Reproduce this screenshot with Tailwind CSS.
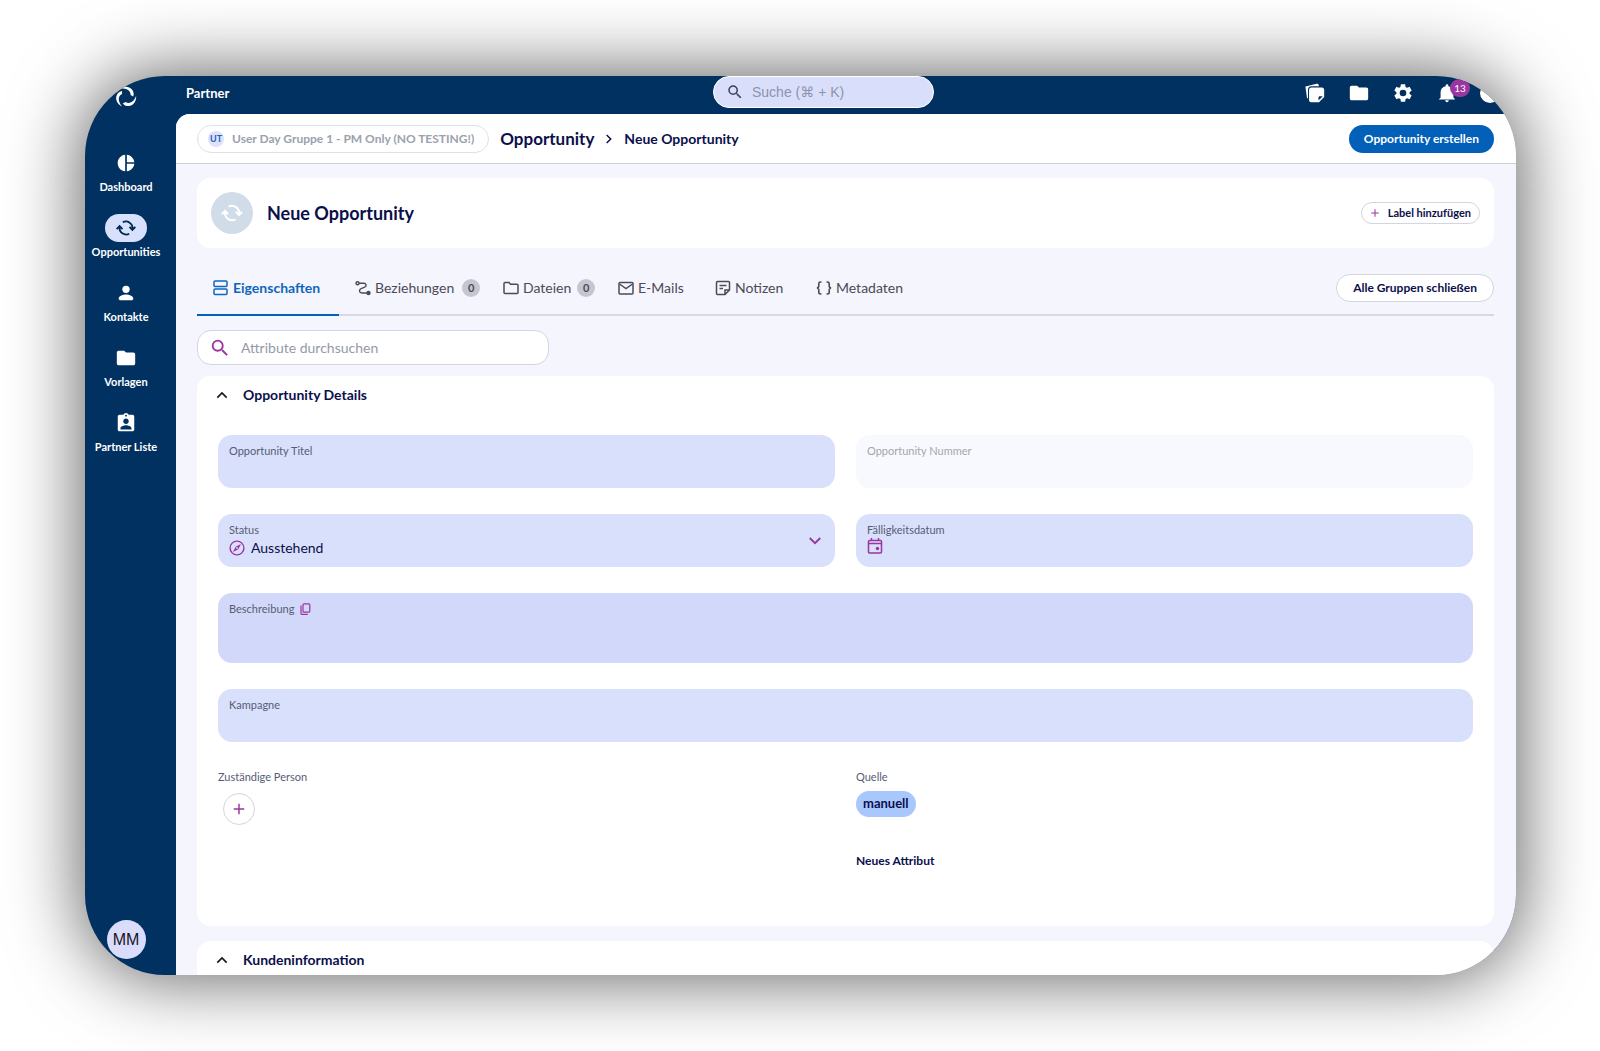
<!DOCTYPE html>
<html lang="de">

<head>
    <meta charset="UTF-8">
    <meta name="viewport" content="width=device-width, initial-scale=1.0">
    <title>Neue Opportunity</title>
    <script src="https://cdn.jsdelivr.net/npm/@tailwindcss/browser@4"></script>
</head>

<body class="bg-white font-['Lato','Open_Sans',sans-serif] text-[#0b0f4b]">

    <!-- shared icons -->
    <svg class="hidden">
        <symbol id="cycle" viewBox="0 0 24 24">
            <path d="M5 11a7.200 7.200 0 0 0 10.500 7.300M19 13A7.200 7.200 0 0 0 8.500 5.700M1.800 13.200L5 10l3.200 3.200M15.800 10.800L19 14l3.200-3.200" fill="none" stroke="currentColor" stroke-width="2" />
        </symbol>
        <symbol id="folder" viewBox="0 0 24 24">
            <path d="M10 4H4c-1.100 0-2 .9-2 2v12c0 1.100.9 2 2 2h16c1.100 0 2-.9 2-2V8c0-1.100-.9-2-2-2h-8z" fill="currentColor" />
        </symbol>
        <symbol id="search" viewBox="0 0 24 24">
            <path d="M15.500 14h-.79l-.28-.27A6.470 6.470 0 0 0 16 9.500 6.500 6.500 0 1 0 9.500 16c1.610 0 3.090-.59 4.230-1.570l.27.28v.79l5 4.990L20.490 19zm-6 0C7.010 14 5 11.990 5 9.500S7.010 5 9.500 5 14 7.010 14 9.500 11.990 14 9.500 14z" fill="currentColor" />
        </symbol>
        <symbol id="chevron-up" viewBox="0 0 24 24">
            <path d="M5 16l7-7 7 7" fill="none" stroke="currentColor" stroke-width="2.500" />
        </symbol>
        <symbol id="plus" viewBox="0 0 24 24">
            <path d="M12 3v18M3 12h18" fill="none" stroke="currentColor" stroke-width="2.500" />
        </symbol>
    </svg>

    <div class="h-screen py-[76px] pl-[85px] pr-[84px]">
        <div class="flex h-full overflow-hidden rounded-[80px] bg-[#013161] shadow-[0_0_72px_4px_rgba(0,0,0,0.62)]">

            <!-- sidebar -->
            <nav class="flex w-[91px] shrink-0 flex-col items-center pb-4 pr-[9px] pt-[9px] text-[11px] font-bold leading-[15px] text-white">
                <a href="#" aria-label="Startseite" class="mb-10 block">
                    <svg class="h-6 w-6" viewBox="0 0 24 24" fill="currentColor">
                        <path id="blade" d="M5.800 3.900C10.500.600 16 1.500 18.500 5.300c1.300 2 1.500 4.200.7 6.300L16.600 10c.1-2.600-1.200-4.700-3.400-5.600C11 3.500 8.400 3.300 5.800 3.900z" />
                        <use href="#blade" transform="rotate(120 12 12)" />
                        <use href="#blade" transform="rotate(240 12 12)" />
                    </svg>
                </a>
                <div class="flex flex-1 flex-col items-center gap-5">
                    <a href="#" class="flex flex-col items-center gap-0.5">
                        <span class="flex h-7 items-center">
                            <svg class="h-5 w-5" viewBox="0 0 24 24" fill="currentColor"><path d="M11 2v20c-5.070-.5-9-4.790-9-10s3.930-9.500 9-10zm2.030 0v8.990H22c-.47-4.740-4.240-8.520-8.970-8.990zm0 11.010V22c4.740-.47 8.500-4.250 8.970-8.990z" /></svg>
                        </span>
                        Dashboard
                    </a>
                    <a href="#" class="flex flex-col items-center gap-0.5">
                        <span class="flex h-7 w-[42px] items-center justify-center rounded-full bg-[#d8e1fc] text-[#01284f]">
                            <svg class="h-[22px] w-[22px]"><use href="#cycle" /></svg>
                        </span>
                        Opportunities
                    </a>
                    <a href="#" class="flex flex-col items-center gap-0.5">
                        <span class="flex h-7 items-center">
                            <svg class="h-[22px] w-[22px]" viewBox="0 0 24 24" fill="currentColor"><circle cx="12" cy="8" r="4" /><path d="M12 13.500c-2.700 0-8 1.300-8 4.200V18c0 1.100.9 2 2 2h12c1.100 0 2-.9 2-2v-.3c0-2.900-5.300-4.200-8-4.200z" /></svg>
                        </span>
                        Kontakte
                    </a>
                    <a href="#" class="flex flex-col items-center gap-0.5">
                        <span class="flex h-7 items-center"><svg class="h-[22px] w-[22px]"><use href="#folder" /></svg></span>
                        Vorlagen
                    </a>
                    <a href="#" class="flex flex-col items-center gap-0.5">
                        <span class="flex h-7 items-center">
                            <svg class="h-[22px] w-[22px]" viewBox="0 0 24 24" fill="currentColor"><path d="M19 3h-4.180C14.400 1.840 13.300 1 12 1s-2.400.84-2.820 2H5c-1.100 0-2 .9-2 2v14c0 1.100.9 2 2 2h14c1.100 0 2-.9 2-2V5c0-1.100-.9-2-2-2zm-7 0c.55 0 1 .45 1 1s-.45 1-1 1-1-.45-1-1 .45-1 1-1zm0 4c1.660 0 3 1.340 3 3s-1.340 3-3 3-3-1.340-3-3 1.340-3 3-3zm6 12H6v-1.400c0-2 4-3.100 6-3.100s6 1.100 6 3.100z" /></svg>
                        </span>
                        Partner Liste
                    </a>
                </div>
                <button type="button" class="h-[39px] w-[39px] rounded-full bg-[#d9dcfa] font-['Liberation_Sans',sans-serif] text-base font-normal text-[#16161d]">MM</button>
            </nav>

            <div class="flex min-w-0 flex-1 flex-col">

                <!-- top bar -->
                <header class="flex h-[38px] shrink-0 items-start justify-between pl-[10px] pr-4 text-white">
                    <span class="w-[527px] pt-[7px] text-[13px] font-bold leading-5">Partner</span>
                    <label class="flex h-8 w-[221px] items-center gap-2 rounded-full border border-white bg-[#d9dffb] pl-3">
                        <svg class="h-[18px] w-[18px] shrink-0 text-[#3c4257]"><use href="#search" /></svg>
                        <input type="search" aria-label="Suche" placeholder="Suche (⌘ + K)" class="w-full min-w-0 bg-transparent font-['Liberation_Sans','DejaVu_Sans',sans-serif] text-sm outline-none placeholder:text-[#8d93ab]">
                    </label>
                    <div class="flex flex-1 items-center justify-end gap-[22px] pt-[6px]">
                        <button type="button" aria-label="Notizen">
                            <svg class="h-[22px] w-[22px]" viewBox="0 0 24 24" fill="currentColor"><path d="M1.500 4.800L13.800 2c1-.3 1.900.2 2.200 1.200l.3 1.300H8C5.800 4.500 4.400 6 4.400 8v10L3.300 17.500z" /><path d="M8 6h11.500c1.400 0 2.500 1.100 2.500 2.500v7.900L16.400 22H8c-1.400 0-2.500-1.100-2.500-2.500v-11C5.500 7.100 6.600 6 8 6zm7.800 14.200l4.700-4.700h-3.200c-.8 0-1.500.7-1.500 1.500z" /></svg>
                        </button>
                        <button type="button" aria-label="Dateien"><svg class="h-[22px] w-[22px]"><use href="#folder" /></svg></button>
                        <button type="button" aria-label="Einstellungen">
                            <svg class="h-[22px] w-[22px]" viewBox="0 0 24 24" fill="currentColor"><path d="M19.140 12.940c.04-.3.060-.61.060-.94s-.02-.64-.07-.94l2.030-1.580a.49.49 0 0 0 .12-.61l-1.920-3.320a.49.49 0 0 0-.59-.22l-2.390.96a7 7 0 0 0-1.620-.94l-.36-2.540a.48.48 0 0 0-.48-.41h-3.840a.47.47 0 0 0-.47.41l-.36 2.540c-.59.24-1.130.57-1.620.94l-2.390-.96a.47.47 0 0 0-.59.22L2.740 8.870a.47.47 0 0 0 .12.61l2.030 1.580c-.05.3-.09.63-.09.94s.02.64.07.94l-2.030 1.580a.49.49 0 0 0-.12.61l1.920 3.320c.12.22.37.29.59.22l2.390-.96c.5.38 1.030.7 1.620.94l.36 2.540c.05.24.24.41.48.41h3.840c.24 0 .44-.17.47-.41l.36-2.540c.59-.24 1.130-.56 1.620-.94l2.390.96c.22.080.47 0 .59-.22l1.920-3.320a.47.47 0 0 0-.12-.61zM12 15.600A3.600 3.600 0 1 1 12 8.400a3.600 3.600 0 0 1 0 7.200z" /></svg>
                        </button>
                        <button type="button" aria-label="Benachrichtigungen" class="relative">
                            <svg class="h-[22px] w-[22px]" viewBox="0 0 24 24" fill="currentColor"><path d="M12 22c1.100 0 2-.9 2-2h-4c0 1.100.9 2 2 2zm7-5v-6c0-3.070-2.130-5.640-5.500-6.320V4a1.500 1.500 0 0 0-3 0v.68C7.130 5.360 5 7.920 5 11v6l-2 2h18z" /></svg>
                            <span class="absolute -top-[3px] left-[14px] flex h-[18px] w-5 items-center justify-center rounded-full bg-[#9b35a0] text-[10px] leading-none">13</span>
                        </button>
                        <button type="button" aria-label="Profil" class="h-5 w-5 rounded-full bg-white"></button>
                    </div>
                </header>

                <main class="flex min-h-0 flex-1 flex-col overflow-hidden rounded-tl-[14px] bg-[#f5f5fe]">

                    <!-- breadcrumb bar -->
                    <div class="flex h-[50px] shrink-0 items-center border-b border-[#cdced8] bg-white pl-[21px] pr-[22px]">
                        <button type="button" class="flex h-7 items-center gap-2 rounded-full border border-[#dfe1e6] pl-[10px] pr-[14px] text-xs font-bold text-[#9ba1ae]">
                            <span class="flex h-4 w-4 items-center justify-center rounded-full bg-[#dde1fb] text-[9px] text-[#2463b5]">UT</span>
                            User Day Gruppe 1 - PM Only (NO TESTING!)
                        </button>
                        <a href="#" class="ml-[11px] text-[17px] font-bold">Opportunity</a>
                        <svg class="mx-2 h-[14px] w-[14px]" viewBox="0 0 24 24" fill="none" stroke="currentColor" stroke-width="2.500"><path d="M8 5l7 7-7 7" /></svg>
                        <span class="text-sm font-bold">Neue Opportunity</span>
                        <button type="button" class="ml-auto h-7 rounded-full bg-[#0260b8] px-[15px] text-xs font-bold text-white">Opportunity erstellen</button>
                    </div>

                    <div class="min-h-0 flex-1 overflow-hidden pl-[21px] pr-[22px] pt-[14px]">

                        <section class="flex h-[70px] items-center rounded-[14px] bg-white px-[14px]">
                            <span class="flex h-[42px] w-[42px] items-center justify-center rounded-full bg-[#d0dce7] text-white">
                                <svg class="h-6 w-6"><use href="#cycle" /></svg>
                            </span>
                            <h1 class="ml-[14px] text-lg font-bold leading-6">Neue Opportunity</h1>
                            <button type="button" class="ml-auto flex h-[22px] items-center gap-2 rounded-full border border-[#d3d5df] px-2 text-[11px] font-bold">
                                <svg class="h-[10px] w-[10px] text-[#9b35a0]"><use href="#plus" /></svg>
                                Label hinzufügen
                            </button>
                        </section>

                        <!-- tabs -->
                        <div class="mt-[13px] flex h-[55px] items-stretch border-b-2 border-[#d8d9e4] text-sm text-[#4a4b57]">
                            <button type="button" class="-mb-0.5 flex w-[142px] items-center gap-1 border-b-2 border-[#0260b8] pl-4 font-bold text-[#0f66bb]">
                                <svg class="h-4 w-4" viewBox="0 0 16 16" fill="none" stroke="currentColor" stroke-width="1.500"><rect x="1" y="1" width="13" height="5.500" rx="1" /><rect x="1" y="9" width="13" height="5.500" rx="1" /></svg>
                                Eigenschaften
                            </button>
                            <button type="button" class="flex w-[149px] items-center gap-1 pl-4">
                                <svg class="h-4 w-4" viewBox="0 0 16 16" fill="none" stroke="currentColor" stroke-width="1.400"><circle cx="2.500" cy="3.200" r="1.500" /><path d="M4 3.200h4.500c3 0 3.400 3 1.200 4L6.200 8.600C3.600 9.700 4 13 7 13h5" /><circle cx="13.500" cy="13" r="1.500" fill="currentColor" /></svg>
                                Beziehungen
                                <span class="ml-1 flex h-[18px] w-[18px] items-center justify-center rounded-full bg-[#c6c6d0] text-[11px] font-bold">0</span>
                            </button>
                            <button type="button" class="flex w-[114px] items-center gap-1 pl-[15px]">
                                <svg class="h-4 w-4" viewBox="0 0 16 16" fill="none" stroke="currentColor" stroke-width="1.500"><path d="M1 3.500c0-.6.400-1 1-1h4l1.500 1.700H14c.6 0 1 .4 1 1v7.300c0 .6-.4 1-1 1H2c-.6 0-1-.4-1-1z" /></svg>
                                Dateien
                                <span class="ml-[2px] flex h-[18px] w-[18px] items-center justify-center rounded-full bg-[#c6c6d0] text-[11px] font-bold">0</span>
                            </button>
                            <button type="button" class="flex w-[98px] items-center gap-1 pl-4">
                                <svg class="h-4 w-4" viewBox="0 0 16 16" fill="none" stroke="currentColor" stroke-width="1.500"><rect x="1" y="2.500" width="14" height="11.500" rx="1" /><path d="M1.500 4L8 8.500 14.500 4" /></svg>
                                E-Mails
                            </button>
                            <button type="button" class="flex w-[100px] items-center gap-1 pl-[15px]">
                                <svg class="h-4 w-4" viewBox="0 0 16 16" fill="none" stroke="currentColor" stroke-width="1.500"><path d="M2.500 1.500h11c.6 0 1 .4 1 1V10l-4.500 4.500H2.500c-.6 0-1-.4-1-1v-11c0-.6.400-1 1-1zM14.500 10H10v4.500M4.500 5.500h7M4.500 8.500h3.500" /></svg>
                                Notizen
                            </button>
                            <button type="button" class="flex items-center gap-1 pl-4">
                                <svg class="h-4 w-4" viewBox="0 0 16 16" fill="none" stroke="currentColor" stroke-width="1.600"><path d="M5.500 2H4.500C3.300 2 2.800 2.700 2.800 3.700v2.100C2.800 7.200 2 8 .8 8 2 8 2.800 8.800 2.800 10.200v2.100c0 1 .5 1.700 1.700 1.700h1M10.500 2h1c1.200 0 1.700.7 1.700 1.700v2.100c0 1.400.8 2.200 2 2.200-1.200 0-2 .8-2 2.200v2.100c0 1-.5 1.700-1.700 1.700h-1" /></svg>
                                Metadaten
                            </button>
                            <button type="button" class="ml-auto h-7 self-center rounded-full border border-[#d3d5df] bg-white px-4 text-xs font-bold text-[#0b0f4b]">Alle Gruppen schließen</button>
                        </div>

                        <label class="mt-[14px] flex h-[35px] w-[352px] items-center gap-[10px] rounded-[14px] border border-[#d3d5df] bg-white pl-[11px]">
                            <svg class="h-[22px] w-[22px] shrink-0 text-[#9b35a0]"><use href="#search" /></svg>
                            <input type="search" aria-label="Attribute durchsuchen" placeholder="Attribute durchsuchen" class="w-full min-w-0 bg-transparent text-sm outline-none placeholder:text-[#949aa6]">
                        </label>

                        <section class="mt-[11px] h-[550px] rounded-[14px] bg-white px-[21px]">
                            <button type="button" class="flex h-[38px] items-center gap-[13px] text-sm font-bold leading-5">
                                <svg class="-ml-1 h-4 w-4 text-[#16161d]"><use href="#chevron-up" /></svg>
                                Opportunity Details
                            </button>

                            <form class="mt-[21px] grid grid-cols-2 gap-x-[21px] gap-y-[26px] text-[11px] text-[#565c76]">
                                <div class="h-[53px] rounded-[14px] bg-[#d9e0fb] px-[11px] pt-2">
                                    <label for="titel" class="block leading-4">Opportunity Titel</label>
                                    <input id="titel" type="text" class="block w-full bg-transparent text-sm leading-5 text-[#0b0f4b] outline-none">
                                </div>
                                <div class="h-[53px] rounded-[14px] bg-[#f8f9fe] px-[11px] pt-2 text-[#a3a6ae]">
                                    <label for="nummer" class="block leading-4">Opportunity Nummer</label>
                                    <input id="nummer" type="text" disabled class="block w-full bg-transparent text-sm leading-5 outline-none">
                                </div>
                                <div class="flex h-[53px] items-start rounded-[14px] bg-[#d9e0fb] px-[11px] pt-2">
                                    <div class="flex-1">
                                        <label for="status" class="block leading-4">Status</label>
                                        <div class="flex items-center gap-[6px]">
                                            <svg class="h-4 w-4 text-[#9b35a0]" viewBox="0 0 16 16"><circle cx="8" cy="8" r="6.900" fill="none" stroke="currentColor" stroke-width="1.400" /><path d="M12 4L9.300 9.300 4 12l2.700-5.300z" fill="currentColor" /><circle cx="8" cy="8" r=".9" fill="#d9e0fb" /></svg>
                                            <select id="status" class="flex-1 appearance-none bg-transparent text-sm leading-5 text-[#0b0f4b] outline-none">
                                                <option>Ausstehend</option>
                                            </select>
                                        </div>
                                    </div>
                                    <svg class="mt-[10px] h-[18px] w-[18px] rotate-180 text-[#9b35a0]"><use href="#chevron-up" /></svg>
                                </div>
                                <div class="h-[53px] rounded-[14px] bg-[#d9e0fb] px-[11px] pt-2">
                                    <label for="datum" class="block leading-4">Fälligkeitsdatum</label>
                                    <div class="flex items-start gap-[6px]">
                                        <svg class="h-4 w-4 text-[#9b35a0]" viewBox="0 0 16 16" fill="none" stroke="currentColor" stroke-width="1.500"><rect x="1.500" y="2.500" width="13" height="12.500" rx="1" /><path d="M1.500 5.500h13M4.500 0v2.500M11.500 0v2.500" /><circle cx="10.500" cy="10.500" r="1.700" fill="currentColor" stroke="none" /></svg>
                                        <input id="datum" type="text" class="flex-1 bg-transparent text-sm leading-5 text-[#0b0f4b] outline-none">
                                    </div>
                                </div>
                                <div class="col-span-2 h-[70px] rounded-[14px] bg-[#d2d8f9] px-[11px] pt-2">
                                    <div class="flex items-center gap-[6px]">
                                        <label for="beschreibung" class="leading-4">Beschreibung</label>
                                        <button type="button" aria-label="Kopieren" class="text-[#9b35a0]">
                                            <svg class="h-3 w-3" viewBox="0 0 12 12" fill="none" stroke="currentColor" stroke-width="1.200"><rect x="3" y=".8" width="6.800" height="8.400" rx="1" /><path d="M1 2.500v8c0 .5.300.8.800.8h6" /></svg>
                                        </button>
                                    </div>
                                    <textarea id="beschreibung" class="block h-10 w-full resize-none bg-transparent text-sm text-[#0b0f4b] outline-none"></textarea>
                                </div>
                                <div class="col-span-2 h-[53px] rounded-[14px] bg-[#d9e0fb] px-[11px] pt-2">
                                    <label for="kampagne" class="block leading-4">Kampagne</label>
                                    <input id="kampagne" type="text" class="block w-full bg-transparent text-sm leading-5 text-[#0b0f4b] outline-none">
                                </div>
                                <div class="pt-px">
                                    <span class="block leading-4">Zuständige Person</span>
                                    <button type="button" aria-label="Person hinzufügen" class="ml-[5px] mt-2 flex h-8 w-8 items-center justify-center rounded-full border border-[#d3d5df] text-[#9b35a0]">
                                        <svg class="h-[14px] w-[14px]"><use href="#plus" /></svg>
                                    </button>
                                </div>
                                <div class="pt-px">
                                    <span class="block leading-4">Quelle</span>
                                    <span class="mt-[6px] flex h-[26px] w-fit items-center rounded-full bg-[#a8c7fd] px-[7px] text-[13px] font-bold text-[#0b0f4b]">manuell</span>
                                    <button type="button" class="mt-[34px] block text-xs font-bold leading-5 text-[#0b0f4b]">Neues Attribut</button>
                                </div>
                            </form>
                        </section>

                        <section class="mt-[15px] h-40 rounded-[14px] bg-white px-[21px]">
                            <button type="button" class="flex h-[38px] items-center gap-[13px] text-sm font-bold leading-5">
                                <svg class="-ml-1 h-4 w-4 text-[#16161d]"><use href="#chevron-up" /></svg>
                                Kundeninformation
                            </button>
                        </section>
                    </div>
                </main>
            </div>
        </div>
    </div>

</body>

</html>
